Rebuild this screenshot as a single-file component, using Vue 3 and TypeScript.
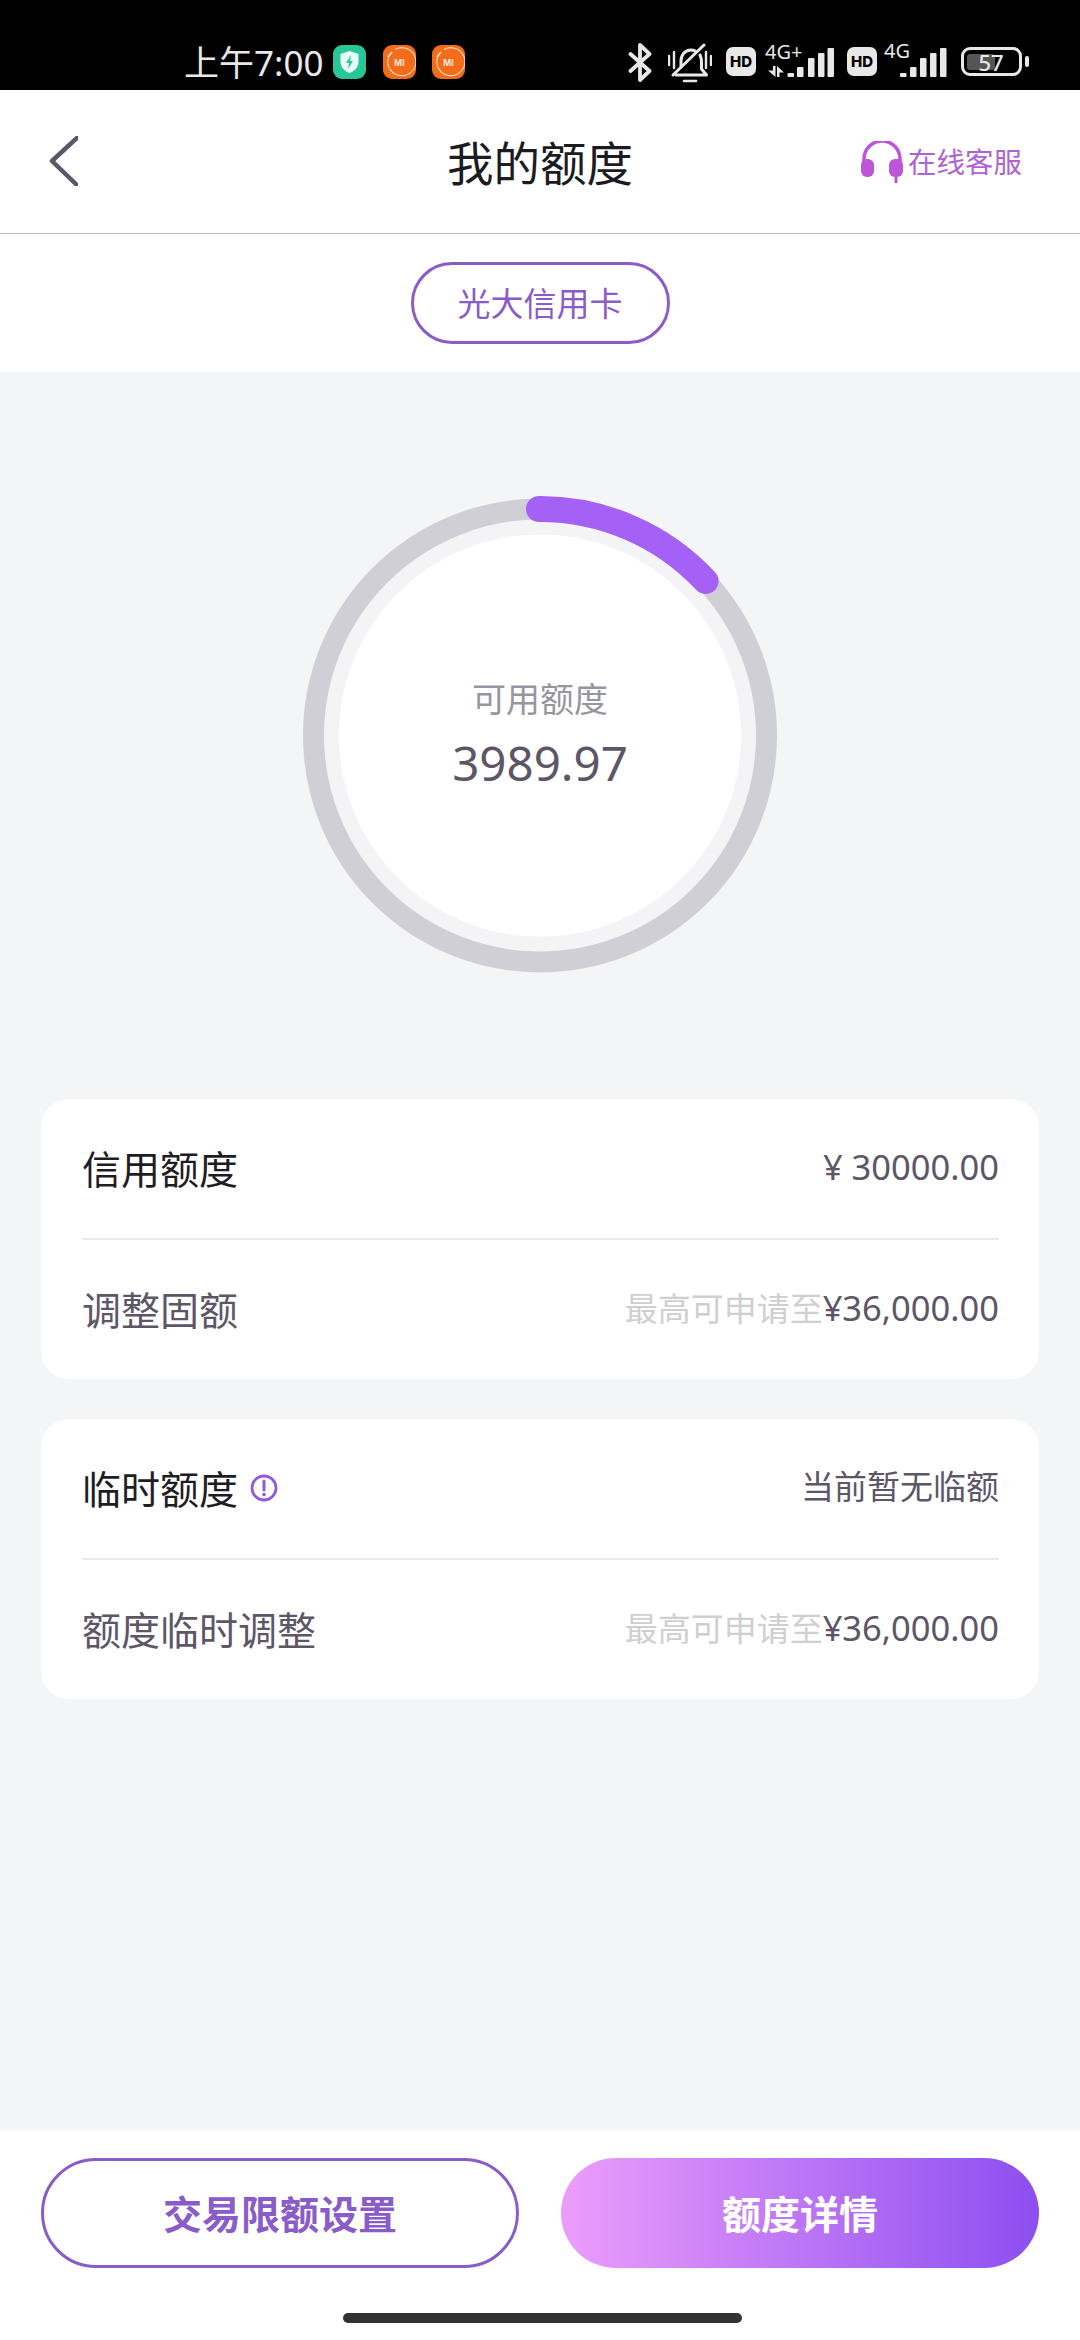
<script setup lang="ts">
const rows = [
  { id: 1, title: '信用额度', value: '¥ 30000.00', cjk: false, sub: '调整固额', hint: '最高可申请至', amount: '¥36,000.00', info: false },
  { id: 2, title: '临时额度', value: '当前暂无临额', cjk: true, sub: '额度临时调整', hint: '最高可申请至', amount: '¥36,000.00', info: true },
]
</script>

<template>
  <div class="page">
    <div class="status">
      <span class="time">上午7:00</span>
      <svg class="app first" width="33" height="34" viewBox="0 0 33 34">
        <rect width="33" height="34" rx="9" fill="#27c79a" />
        <path d="M16.5 6l9 3v8c0 5-4 9-9 11-5-2-9-6-9-11V9z" fill="#e9fbf5" />
        <path d="M18 10l-5 8h3l-1 6 5-8h-3z" fill="#27c79a" />
      </svg>
      <svg v-for="n in 2" :key="n" class="app" width="33" height="34" viewBox="0 0 33 34">
        <rect width="33" height="34" rx="9" fill="#f26c1a" />
        <path d="M7.500 8.500A14 14 0 1 0 12 4.500" fill="none" stroke="#ffd9bd" stroke-width="1.100" />
        <path d="M5 12l4-5" stroke="#ffd9bd" stroke-width="2" />
        <text x="16.500" y="20.500" text-anchor="middle" font-size="8.500" font-weight="700" fill="#f4e6dc" font-family="Inter, sans-serif">MI</text>
      </svg>
      <span class="grow"></span>
      <svg class="bt" width="24" height="39" viewBox="0 0 24 39" fill="none" stroke="#e8e8e8" stroke-width="3.800" stroke-linejoin="round" stroke-linecap="round">
        <path d="M2.500 11l19 17-9.500 9V2l9.500 9-19 17" />
      </svg>
      <svg class="bell" width="44" height="41" viewBox="0 0 44 41" fill="none" stroke="#e8e8e8" stroke-width="3" stroke-linecap="round" stroke-linejoin="round">
        <path d="M13 25v-6c0-6 4-11 10-11 1.500 0 3 .3 4.300 1" />
        <path d="M32 13c1 2 1.500 4 1.500 7v7l5 6H8" />
        <path d="M5 33L36 3" />
        <path d="M16 39h12" stroke-width="2.600" />
        <path d="M1 14v9M6 10v16M38 10v16M43 14v9" stroke-width="2.400" />
      </svg>
      <span class="hd first-hd">HD</span>
      <svg class="sig first-sig" width="80" height="46" viewBox="0 -10 80 46">
        <text x="0" y="16" font-size="20" fill="#e8e8e8" font-family="'Noto Sans', sans-serif">4G+</text>
        <path d="M8 23h2.500v11L3 27.500h5zM12 34V23l7 6.500h-4.500V34z" fill="#e8e8e8" />
        <rect x="22.500" y="30" width="6.500" height="4" rx="1" fill="#e8e8e8" />
        <rect x="32" y="24" width="6.500" height="10" rx="1" fill="#e8e8e8" />
        <rect x="43" y="15" width="6.500" height="19" rx="1" fill="#e8e8e8" />
        <rect x="53" y="10" width="6.500" height="24" rx="1" fill="#e8e8e8" />
        <rect x="62.500" y="5" width="6.500" height="29" rx="1" fill="#e8e8e8" />
      </svg>
      <span class="hd second-hd">HD</span>
      <svg class="sig second-sig" width="63" height="46" viewBox="0 -10 63 46">
        <text x="0" y="15" font-size="20" fill="#e8e8e8" font-family="'Noto Sans', sans-serif">4G</text>
        <rect x="16" y="30" width="6.500" height="4" rx="1" fill="#e8e8e8" />
        <rect x="26" y="24" width="6.500" height="10" rx="1" fill="#e8e8e8" />
        <rect x="36" y="15" width="6.500" height="19" rx="1" fill="#e8e8e8" />
        <rect x="46" y="10" width="6.500" height="24" rx="1" fill="#e8e8e8" />
        <rect x="56" y="5" width="6.500" height="29" rx="1" fill="#e8e8e8" />
      </svg>
      <div class="battery"><span class="level"></span><span class="pct">57</span></div>
      <span class="tip"></span>
    </div>

    <header class="nav">
      <svg class="back" width="29" height="50" viewBox="0 0 29 50" fill="none" stroke="#5c5667" stroke-width="4.500" stroke-linejoin="round">
        <path d="M30 0L3 25l27 26" />
      </svg>
      <h1 class="title">我的额度</h1>
      <div class="service">
        <svg width="44" height="43" viewBox="0 0 44 43">
          <path d="M4 22v-4a18 18 0 0 1 36 0v4" fill="none" stroke="#bd55d9" stroke-width="3.500" />
          <rect x="1" y="18" width="13" height="18" rx="6" fill="#bd55d9" />
          <rect x="29" y="18" width="14" height="18" rx="6" fill="#bd55d9" />
          <path d="M36 34v8" stroke="#bd55d9" stroke-width="3" />
        </svg>
        <span class="service-text">在线客服</span>
      </div>
    </header>

    <div class="chip-row"><div class="chip">光大信用卡</div></div>

    <main class="main">
      <div class="gauge">
        <svg class="gauge-art" width="480" height="480" viewBox="0 0 480 480">
          <circle cx="240" cy="239.500" r="226.500" fill="#f4f4f7" stroke="#d0cfd6" stroke-width="21" />
          <circle cx="240" cy="239.500" r="201" fill="#fff" />
          <path d="M239 13A226.500 226.500 0 0 1 405.600 85" fill="none" stroke="#a561f5" stroke-width="26" stroke-linecap="round" />
        </svg>
        <div class="gauge-text">
          <div class="gauge-label">可用额度</div>
          <div class="gauge-value">3989.97</div>
        </div>
      </div>

      <section v-for="r in rows" :key="r.id" class="card">
        <div class="row top">
          <div class="label">
            <span>{{ r.title }}</span>
            <svg v-if="r.info" class="info" width="28" height="28" viewBox="0 0 28 28">
              <circle cx="14" cy="14" r="12" fill="none" stroke="#8f5bd6" stroke-width="2.800" />
              <path d="M14 7v9" stroke="#8f5bd6" stroke-width="3" stroke-linecap="round" />
              <circle cx="14" cy="20.500" r="1.800" fill="#8f5bd6" />
            </svg>
          </div>
          <div class="value" :class="{ cjk: r.cjk }">{{ r.value }}</div>
        </div>
        <div class="row bottom">
          <div class="label sub">{{ r.sub }}</div>
          <div class="value"><span class="hint">{{ r.hint }}</span>{{ r.amount }}</div>
        </div>
      </section>
    </main>

    <footer class="foot">
      <div class="buttons">
        <div class="btn ghost">交易限额设置</div>
        <div class="btn solid">额度详情</div>
      </div>
      <div class="home"></div>
    </footer>
  </div>
</template>

<style scoped>
.page {
  width: 1080px;
  height: 2340px;
  display: flex;
  flex-direction: column;
  background: #fff;
  overflow: hidden;
  font-family: "Noto Sans CJK SC", "Noto Sans", sans-serif;
}
.status {
  height: 90px;
  flex: none;
  box-sizing: border-box;
  padding: 42px 40px 0 184px;
  display: flex;
  align-items: flex-start;
  background: #000;
  color: #e8e8e8;
}
.time {
  font-family: "Noto Sans", "Noto Sans CJK SC", sans-serif;
  font-size: 35px;
  line-height: 42px;
  width: 149px;
  white-space: nowrap;
}
.app { margin: 3px 0 0 16.5px; flex: none; }
.app.first { margin-left: 0; }
.grow { flex: 1; }
.bt { margin: 1px 0 0 -11px; }
.bell { margin: 0 0 0 16px; }
.hd {
  width: 30px;
  height: 29px;
  margin: 5px 0 0 14px;
  border-radius: 7px;
  background: #e8e8e8;
  color: #000;
  font: 800 15px/29px Inter, sans-serif;
  text-align: center;
}
.sig { flex: none; margin: -9px 0 0 9px; }
.first-sig { margin-right: -11px; }
.second-hd { margin-left: 13px; }
.second-sig { margin-left: 7px; }
.battery {
  width: 61px;
  height: 29px;
  margin: 5px 0 0 14px;
  box-sizing: border-box;
  border: 3.5px solid #e8e8e8;
  border-radius: 9px;
  display: grid;
  align-items: center;
  justify-items: start;
  padding: 0 3px;
}
.level {
  grid-area: 1 / 1;
  width: 28px;
  height: 16px;
  background: #555;
  border-radius: 3px;
}
.pct {
  grid-area: 1 / 1;
  width: 48px;
  text-align: center;
  font: 500 22px/22px "Noto Sans", sans-serif;
  color: #e8e8e8;
}
.tip {
  width: 4px;
  height: 11px;
  margin: 14px 11px 0 3px;
  border-radius: 2px;
  background: #e8e8e8;
}
.nav {
  height: 144px;
  flex: none;
  box-sizing: border-box;
  border-bottom: 1px solid #b8b8b8;
  padding: 0 58px;
  display: grid;
  grid-template-columns: 1fr auto 1fr;
  align-items: center;
}
.back { margin: -1px 0 0 -9px; }
.title {
  margin: 0 0 2px;
  font-size: 46.5px;
  line-height: 60px;
  font-weight: 400;
  color: #1d1b22;
  white-space: nowrap;
}
.service {
  justify-self: end;
  display: flex;
  align-items: center;
  gap: 4px;
  margin-top: 1px;
  font-size: 28.5px;
  line-height: 43px;
  color: #b162d2;
  white-space: nowrap;
}
.service-text { margin-top: -3px; }
.chip-row {
  height: 138px;
  flex: none;
  box-sizing: border-box;
  padding-top: 28px;
  display: flex;
  justify-content: center;
}
.chip {
  width: 259px;
  height: 82px;
  box-sizing: border-box;
  border: 3px solid #8a5cc9;
  border-radius: 41px;
  text-align: center;
  font-size: 33px;
  line-height: 74px;
  color: #8a5cc9;
}
.main {
  flex: 1;
  background: #f4f5f7;
  box-sizing: border-box;
  padding: 124px 41px 0;
}
.gauge {
  display: grid;
  justify-items: center;
  align-items: center;
  height: 480px;
  margin-bottom: 123px;
}
.gauge-art, .gauge-text { grid-area: 1 / 1; }
.gauge-text { text-align: center; margin-top: -6px; }
.gauge-label {
  font-size: 34px;
  line-height: 44px;
  color: #97959f;
}
.gauge-value {
  margin-top: 15px;
  font-family: "Noto Sans", sans-serif;
  font-size: 47.5px;
  line-height: 56px;
  color: #5c5667;
}
.card {
  background: #fff;
  border-radius: 28px;
  padding: 0 40px 0 41px;
  margin-bottom: 40px;
}
.row {
  display: flex;
  justify-content: space-between;
  align-items: center;
  box-sizing: border-box;
  padding-bottom: 4px;
}
.row.top {
  height: 141px;
  border-bottom: 2px solid #e9e9ec;
}
.row.bottom { height: 139px; }
.label {
  display: flex;
  align-items: center;
  gap: 11px;
  font-size: 39px;
  line-height: 50px;
  color: #1f1d24;
}
.label.sub { color: #5c5667; }
.info { margin: 3px 0 0 1px; }
.value {
  font-size: 34.5px;
  line-height: 44px;
  color: #5c5667;
  font-family: "Noto Sans", "Noto Sans CJK SC", sans-serif;
  white-space: nowrap;
}
.value.cjk { font-size: 33px; }
.hint {
  font-family: "Noto Sans CJK SC", sans-serif;
  font-size: 33px;
  color: #cfcfd2;
}
.foot {
  height: 210px;
  flex: none;
  box-sizing: border-box;
  padding-top: 28px;
  background: #fff;
}
.buttons {
  display: grid;
  grid-template-columns: 1fr 1fr;
  gap: 42px;
  padding: 0 41px;
}
.btn {
  height: 110px;
  box-sizing: border-box;
  border-radius: 55px;
  text-align: center;
  font-size: 39px;
  font-weight: 600;
}
.ghost {
  border: 3px solid #8a5cc9;
  line-height: 102px;
  color: #8a5cc9;
}
.solid {
  line-height: 108px;
  color: #fff;
  background: linear-gradient(90deg, #ec9dfb, #8c4ef0);
}
.home {
  width: 399px;
  height: 10px;
  margin: 45px 0 0 343px;
  border-radius: 5px;
  background: #333;
}
</style>
